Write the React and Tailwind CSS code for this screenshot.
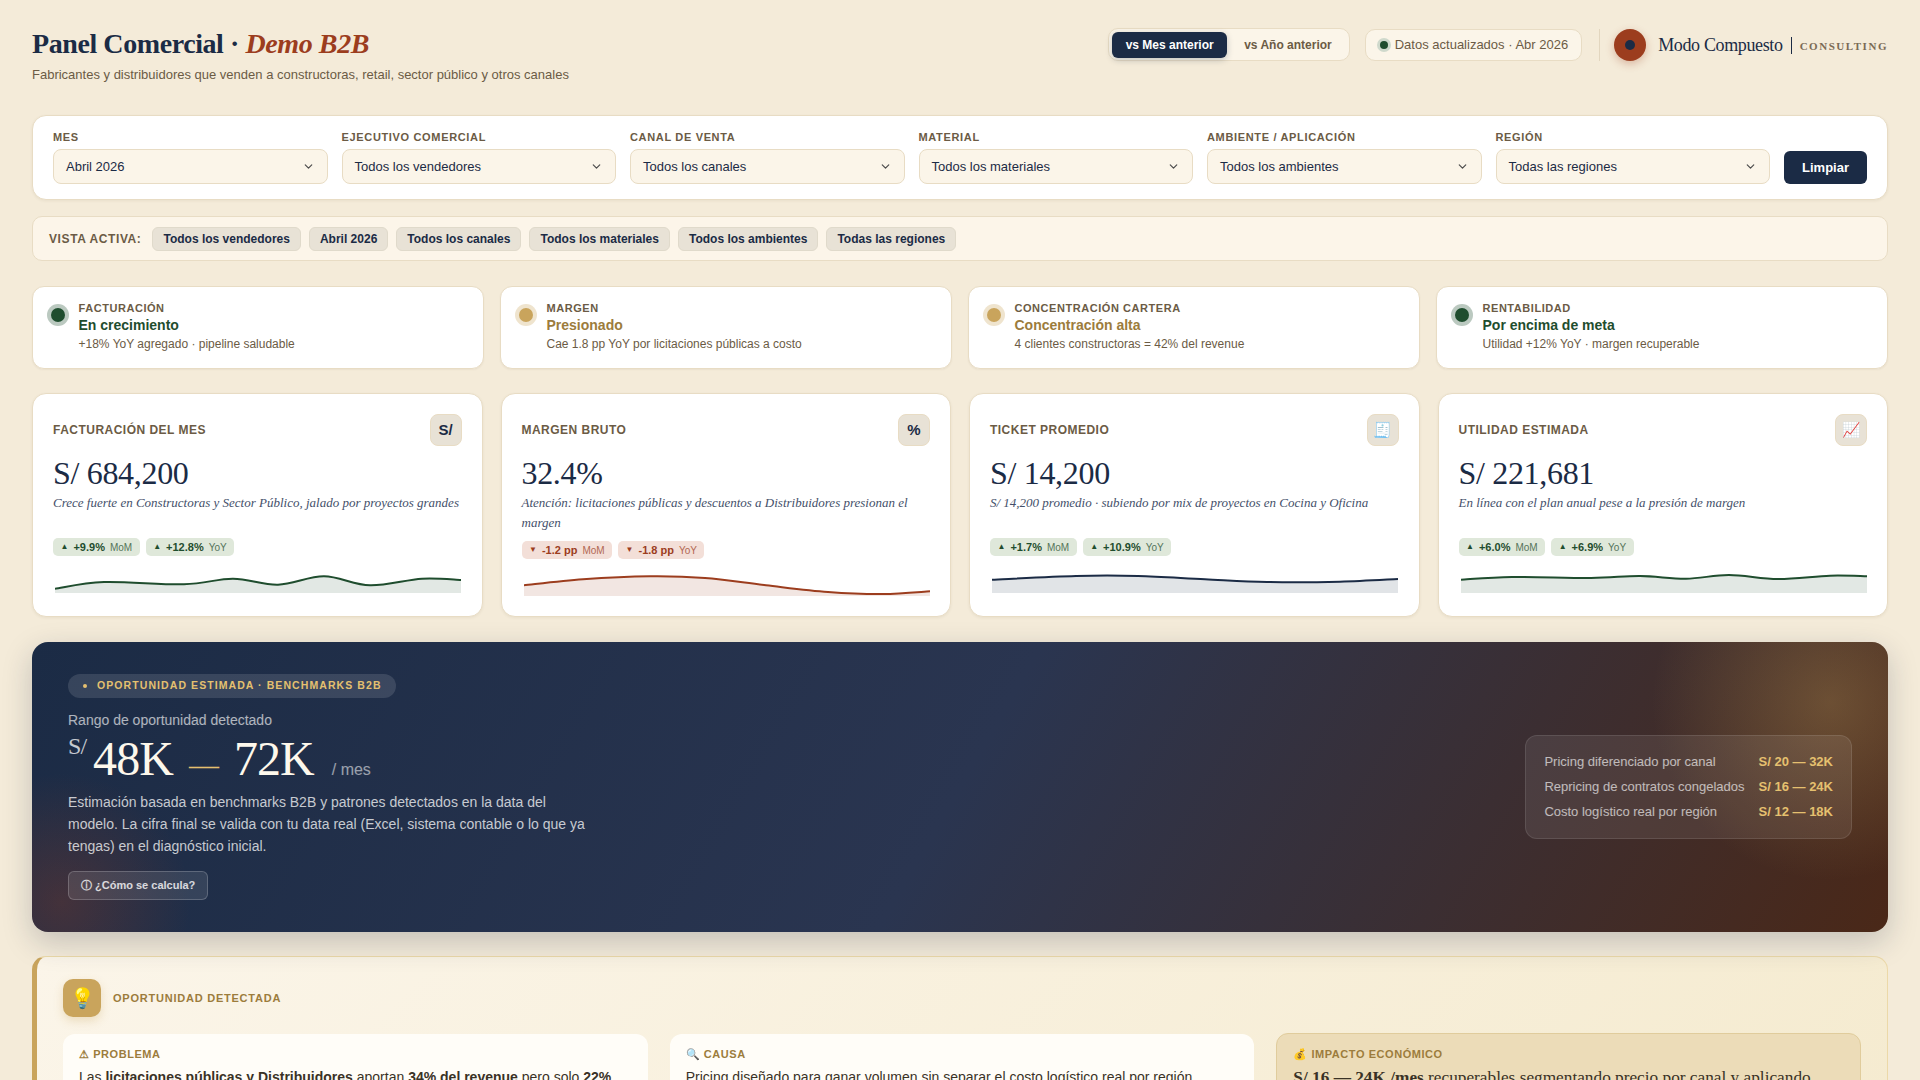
import { ChevronDown } from "lucide-react";

const sans = "font-['Liberation_Sans',Arial,sans-serif]";
const serif = "font-['Liberation_Serif','Times_New_Roman',serif]";

const filters = [
  { label: "Mes", value: "Abril 2026" },
  { label: "Ejecutivo comercial", value: "Todos los vendedores" },
  { label: "Canal de venta", value: "Todos los canales" },
  { label: "Material", value: "Todos los materiales" },
  { label: "Ambiente / Aplicación", value: "Todos los ambientes" },
  { label: "Región", value: "Todas las regiones" },
];

const activeChips = [
  "Todos los vendedores",
  "Abril 2026",
  "Todos los canales",
  "Todos los materiales",
  "Todos los ambientes",
  "Todas las regiones",
];

const statuses = [
  {
    label: "Facturación",
    title: "En crecimiento",
    detail: "+18% YoY agregado · pipeline saludable",
    ok: true,
  },
  {
    label: "Margen",
    title: "Presionado",
    detail: "Cae 1.8 pp YoY por licitaciones públicas a costo",
    ok: false,
  },
  {
    label: "Concentración cartera",
    title: "Concentración alta",
    detail: "4 clientes constructoras = 42% del revenue",
    ok: false,
  },
  {
    label: "Rentabilidad",
    title: "Por encima de meta",
    detail: "Utilidad +12% YoY · margen recuperable",
    ok: true,
  },
];

const kpis = [
  {
    label: "Facturación del mes",
    icon: "S/",
    value: "S/ 684,200",
    note: "Crece fuerte en Constructoras y Sector Público, jalado por proyectos grandes",
    chips: [["+9.9%", "MoM"], ["+12.8%", "YoY"]],
    up: true,
    color: "#1f4d2e",
    points: [[0, 19.7], [49, 13], [129, 15.3], [178, 9.7], [223, 15.7], [269, 7.3], [315, 16.3], [367, 9.7], [406, 11]],
  },
  {
    label: "Margen bruto",
    icon: "%",
    value: "32.4%",
    note: "Atención: licitaciones públicas y descuentos a Distribuidores presionan el margen",
    chips: [["-1.2 pp", "MoM"], ["-1.8 pp", "YoY"]],
    up: false,
    color: "#9c3d1e",
    points: [[0, 13.3], [59, 7.3], [126, 4.3], [181, 6], [242, 13.3], [304, 20], [359, 22], [406, 19.3]],
  },
  {
    label: "Ticket promedio",
    icon: "🧾",
    value: "S/ 14,200",
    note: "S/ 14,200 promedio · subiendo por mix de proyectos en Cocina y Oficina",
    chips: [["+1.7%", "MoM"], ["+10.9%", "YoY"]],
    up: true,
    color: "#1b2b45",
    points: [[0, 10.7], [84, 7], [146, 7], [213, 10.3], [275, 13], [348, 12.7], [406, 10]],
  },
  {
    label: "Utilidad estimada",
    icon: "📈",
    value: "S/ 221,681",
    note: "En línea con el plan anual pese a la presión de margen",
    chips: [["+6.0%", "MoM"], ["+6.9%", "YoY"]],
    up: true,
    color: "#1f4d2e",
    points: [[0, 10.7], [51, 8], [130, 9], [179, 7], [225, 9.7], [268, 6], [317, 10], [369, 6.7], [406, 7.3]],
  },
];

const ranges = [
  ["Pricing diferenciado por canal", "S/ 20 — 32K"],
  ["Repricing de contratos congelados", "S/ 16 — 24K"],
  ["Costo logístico real por región", "S/ 12 — 18K"],
];

// catmull-rom through the sampled points
function smoothLine(pts) {
  let d = `M${pts[0][0]} ${pts[0][1]}`;
  for (let i = 0; i < pts.length - 1; i++) {
    const p0 = pts[i - 1] || pts[i];
    const p1 = pts[i];
    const p2 = pts[i + 1];
    const p3 = pts[i + 2] || p2;
    const c1x = p1[0] + (p2[0] - p0[0]) / 6;
    const c1y = p1[1] + (p2[1] - p0[1]) / 6;
    const c2x = p2[0] - (p3[0] - p1[0]) / 6;
    const c2y = p2[1] - (p3[1] - p1[1]) / 6;
    d += ` C${c1x} ${c1y} ${c2x} ${c2y} ${p2[0]} ${p2[1]}`;
  }
  return d;
}

function Sparkline({ points, color }) {
  const line = smoothLine(points);
  return (
    <svg viewBox="0 0 406 24" className="mx-[2px] mt-[13px] block h-[24px] w-[406px]">
      <path d={`${line} L406 24 L0 24 Z`} fill={color} fillOpacity="0.13" />
      <path d={line} fill="none" stroke={color} strokeWidth="2" />
    </svg>
  );
}

function FilterField({ label, value }) {
  return (
    <div className="min-w-0 flex-1">
      <div className="mb-[6px] text-[11px] leading-[12px] font-bold tracking-[0.06em] text-[#6b5b45] uppercase">
        {label}
      </div>
      <div className="flex h-[35px] items-center justify-between rounded-[8px] border border-[#e8dcc4] bg-[#fbf5e9] pr-[12px] pl-[12px] text-[13px] text-[#1b2b45]">
        <span>{value}</span>
        <ChevronDown size={13} strokeWidth={2.2} className="text-[#4b4b4b]" />
      </div>
    </div>
  );
}

function StatusCard({ label, title, detail, ok }) {
  return (
    <div className="flex h-[83px] items-start gap-[10px] rounded-[12px] border border-[#e8dcc4] bg-white pt-[14px] pl-[17.5px] shadow-[0_1px_2px_rgba(90,70,30,0.06)]">
      <span
        className={
          ok
            ? "mt-[7px] size-[14px] shrink-0 rounded-full bg-[#1f4d2e] shadow-[0_0_0_4px_rgba(31,77,46,0.3)]"
            : "mt-[7px] size-[14px] shrink-0 rounded-full bg-[#c9a45c] shadow-[0_0_0_4px_rgba(201,164,92,0.3)]"
        }
      />
      <div className="ml-[4px]">
        <div className="text-[11px] leading-[14px] font-bold tracking-[0.05em] text-[#6b5b45] uppercase">
          {label}
        </div>
        <div
          className={
            ok
              ? "mt-[1px] text-[14px] leading-[19px] font-bold text-[#1f4d2e]"
              : "mt-[1px] text-[14px] leading-[19px] font-bold text-[#9c7c3c]"
          }
        >
          {title}
        </div>
        <div className="text-[12px] leading-[18px] text-[#6b5b45]">{detail}</div>
      </div>
    </div>
  );
}

function KpiCard({ label, icon, value, note, chips, up, color, points }) {
  return (
    <div className="rounded-[14px] border border-[#e8dcc4] bg-white p-[20px] shadow-[0_1px_3px_rgba(90,70,30,0.07)]">
      <div className="flex items-center justify-between">
        <span className="text-[12px] font-bold tracking-[0.04em] text-[#6b5b45] uppercase">{label}</span>
        <span className="flex size-[32px] items-center justify-center rounded-[8px] border border-[#e8dcc4] bg-[#e8e2d6] text-[15px] font-bold text-[#1b2b45]">
          {icon}
        </span>
      </div>
      <div className={`${serif} mt-[8px] text-[32px] leading-[38px] tracking-[-0.01em] text-[#1b2b45]`}>
        {value}
      </div>
      <p className={`${serif} mt-[1px] min-h-[36px] text-[13px] leading-[19.5px] text-[#44506a] italic`}>{note}</p>
      <div className="mt-[9px] flex gap-[6px]">
        {chips.map(([amount, period]) => (
          <span
            key={period}
            className={
              up
                ? "flex h-[18px] items-center gap-[5px] rounded-[5px] bg-[#dfe8da] px-[7.5px] text-[11px] font-bold text-[#1f4d2e]"
                : "flex h-[18px] items-center gap-[5px] rounded-[5px] bg-[#f3dfd8] px-[7.5px] text-[11px] font-bold text-[#9c3d1e]"
            }
          >
            <span className="text-[8px]">{up ? "▲" : "▼"}</span>
            {amount}
            <span className="text-[10px] font-normal opacity-75">{period}</span>
          </span>
        ))}
      </div>
      <Sparkline points={points} color={color} />
    </div>
  );
}

function HeroBanner() {
  return (
    <div className="relative flex h-[290px] items-center justify-between overflow-hidden rounded-[16px] bg-[linear-gradient(120deg,#1b2b45_0%,#2a3550_50%,#4a2818_100%)] px-[36px] shadow-[0_10px_30px_rgba(27,43,69,0.22)]">
      <div className="pointer-events-none absolute -top-[120px] -right-[122px] size-[360px] rounded-full bg-[radial-gradient(circle,rgba(201,164,92,0.3)_0%,rgba(201,164,92,0)_70%)]" />
      <div className="pointer-events-none absolute -bottom-[100px] -left-[100px] size-[260px] rounded-full bg-[radial-gradient(circle,rgba(156,61,30,0.3)_0%,rgba(156,61,30,0)_70%)]" />
      <div className="relative w-[520px]">
        <div className="flex h-[24px] w-fit items-center gap-[10px] rounded-full bg-white/12 pr-[14px] pl-[15px] text-[10.5px] font-bold tracking-[1.08px] text-[#e5c06f] uppercase">
          <span className="size-[4px] rounded-full bg-[#e5c06f]" />
          Oportunidad estimada · Benchmarks B2B
        </div>
        <div className="mt-[12px] text-[14px] leading-[20px] text-white/65">Rango de oportunidad detectado</div>
        <div className={`${serif} mt-[2px] flex h-[52px] items-baseline text-[48px] leading-[54px] tracking-[-0.02em] text-[#fdf8ec]`}>
          <span className="mr-[7px] self-start text-[24px] leading-[29px] text-white/75">S/</span>
          48K
          <span className="mx-[16px] text-[30px] text-[#e5c06f]">—</span>
          72K
          <span className={`${sans} ml-[18px] text-[16px] tracking-normal text-white/55`}>/ mes</span>
        </div>
        <p className="mt-[7px] text-[14px] leading-[22px] text-white/75">
          Estimación basada en benchmarks B2B y patrones detectados en la data del modelo. La cifra final se valida con
          tu data real (Excel, sistema contable o lo que ya tengas) en el diagnóstico inicial.
        </p>
        <button className="mt-[14px] block h-[29px] rounded-[6px] border border-white/20 bg-white/10 px-[12px] text-[11px] font-bold text-white/80">
          ⓘ ¿Cómo se calcula?
        </button>
      </div>
      <div className="relative flex flex-col gap-[7px] rounded-[12px] border border-white/10 bg-white/8 px-[18px] py-[17px]">
        {ranges.map(([name, amount]) => (
          <div key={name} className="flex justify-between gap-[14px] text-[13px] leading-[18px]">
            <span className="text-white/65">{name}</span>
            <span className="font-bold text-[#e5c06f]">{amount}</span>
          </div>
        ))}
      </div>
    </div>
  );
}

function Opportunity() {
  return (
    <div className="rounded-[14px] border border-l-[5px] border-[#ecd9a8] border-l-[#c9a45c] bg-[linear-gradient(135deg,#fbf5e9,#f5ebd0)] pt-[22px] pr-[26px] pl-[26px]">
      <div className="flex items-center gap-[12px]">
        <span className="flex size-[38px] items-center justify-center rounded-[10px] bg-[#c9a45c] text-[20px] shadow-[0_4px_10px_rgba(201,164,92,0.3)]">
          💡
        </span>
        <span className="text-[11px] font-bold tracking-[0.07em] text-[#9c7c3c] uppercase">Oportunidad detectada</span>
      </div>
      <div className="mt-[17px] grid grid-cols-3 gap-[22px]">
        <div className="rounded-[12px] bg-[#fffdf8] px-[16px] pt-[14px] pb-[16px]">
          <div className="text-[11px] leading-[13px] font-bold tracking-[0.05em] text-[#9c7c3c] uppercase">⚠ Problema</div>
          <p className="mt-[5px] text-[14px] leading-[22px] whitespace-nowrap text-[#3a3226]">
            Las <b>licitaciones públicas y Distribuidores</b> aportan <b>34% del revenue</b> pero solo <b>22%</b>
          </p>
        </div>
        <div className="rounded-[12px] bg-[#fffdf8] px-[16px] pt-[14px] pb-[16px]">
          <div className="text-[11px] leading-[13px] font-bold tracking-[0.05em] text-[#9c7c3c] uppercase">🔍 Causa</div>
          <p className="mt-[5px] text-[14px] leading-[22px] whitespace-nowrap text-[#3a3226]">
            Pricing diseñado para ganar volumen sin separar el costo logístico real por región
          </p>
        </div>
        <div className="-mt-[1px] rounded-[12px] border border-[#e0cc9c] bg-[#ecdcb8] px-[16px] pt-[14px] pb-[16px]">
          <div className="text-[11px] leading-[13px] font-bold tracking-[0.05em] text-[#9c7c3c] uppercase">💰 Impacto económico</div>
          <p className={`${serif} mt-[5px] text-[17.28px] leading-[24px] whitespace-nowrap text-[#3a3226]`}>
            <b>S/ 16 — 24K /mes</b> recuperables segmentando precio por canal y aplicando
          </p>
        </div>
      </div>
    </div>
  );
}

export default function App() {
  return (
    <div className={`${sans} h-screen overflow-hidden bg-[#f4ebd9] px-[32px] pt-[28px]`}>
      <header className="flex h-[59px] items-start justify-between">
        <div>
          <h1 className={`${serif} text-[28px] leading-[32px] font-bold tracking-[-0.015em] text-[#1b2b45]`}>
            Panel Comercial · <em className="text-[#9c3d1e]">Demo B2B</em>
          </h1>
          <p className="mt-[6px] text-[13px] leading-[18px] text-[#6b5b45]">
            Fabricantes y distribuidores que venden a constructoras, retail, sector público y otros canales
          </p>
        </div>
        <div className="flex items-end">
          <div className="flex h-[33px] items-center rounded-[10px] border border-[#e8dcc4] bg-[#fbf5e9] pr-[17px] pl-[3px] text-[12px] font-bold text-[#6b5b45]">
            <span className="flex h-[26px] w-[115px] items-center justify-center rounded-[6px] bg-[#1b2b45] text-white shadow-[0_2px_6px_rgba(27,43,69,0.25)]">
              vs Mes anterior
            </span>
            <span className="ml-[17px]">vs Año anterior</span>
          </div>
          <div className="ml-[15px] flex h-[32px] items-center gap-[4px] rounded-[10px] border border-[#e8dcc4] bg-[#fbf5e9] pr-[13px] pl-[11px] text-[13px] text-[#6b5b45]">
            <span className="flex size-[14px] items-center justify-center rounded-full bg-[#cfd9cc]">
              <span className="size-[8px] rounded-full bg-[#1f4d2e]" />
            </span>
            Datos actualizados · Abr 2026
          </div>
          <div className="mr-[14px] ml-[17px] h-[32px] w-px bg-[#e2d6bf]" />
          <span className="flex size-[32px] items-center justify-center rounded-full bg-[#9c3d1e] shadow-[0_3px_8px_rgba(156,61,30,0.3)]">
            <span className="size-[10px] rounded-full bg-[#1b2b45]" />
          </span>
          <div className="ml-[12px] flex h-[32px] items-center">
            <span className={`${serif} text-[18px] tracking-[-0.02em] text-[#1b2b45]`}>Modo Compuesto</span>
            <span className="mx-[8px] h-[17px] w-px bg-[#1b2b45]" />
            <span className={`${serif} mt-[2px] text-[11px] font-bold tracking-[0.14em] text-[#7a6a55] uppercase`}>Consulting</span>
          </div>
        </div>
      </header>

      <section className="mt-[28px] flex items-end gap-[14px] rounded-[14px] border border-[#e8dcc4] bg-white px-[20px] py-[15px] shadow-[0_1px_3px_rgba(90,70,30,0.07)]">
        {filters.map((f) => (
          <FilterField key={f.label} label={f.label} value={f.value} />
        ))}
        <button className="h-[33px] w-[83px] shrink-0 rounded-[6px] bg-[#1b2b45] text-[13px] font-bold text-white">
          Limpiar
        </button>
      </section>

      <section className="mt-[16px] flex h-[45px] items-center rounded-[10px] border border-[#e8dcc4] bg-[#fcf5e9] pl-[16px]">
        <span className="mr-[11px] text-[12px] font-bold tracking-[0.05em] text-[#6b5b45] uppercase">Vista activa:</span>
        <div className="flex gap-[8px]">
          {activeChips.map((chip) => (
            <span
              key={chip}
              className="flex h-[24px] items-center rounded-[6px] border border-[#e0dacb] bg-[#e8e2d6] px-[10px] text-[12px] font-bold text-[#1b2b45]"
            >
              {chip}
            </span>
          ))}
        </div>
      </section>

      <section className="mt-[25px] grid grid-cols-4 gap-[16px]">
        {statuses.map((s) => (
          <StatusCard key={s.label} {...s} />
        ))}
      </section>

      <section className="mt-[24px] grid grid-cols-4 gap-[18px]">
        {kpis.map((k) => (
          <KpiCard key={k.label} {...k} />
        ))}
      </section>

      <section className="mt-[25px]">
        <HeroBanner />
      </section>

      <section className="mt-[24px]">
        <Opportunity />
      </section>
    </div>
  );
}
